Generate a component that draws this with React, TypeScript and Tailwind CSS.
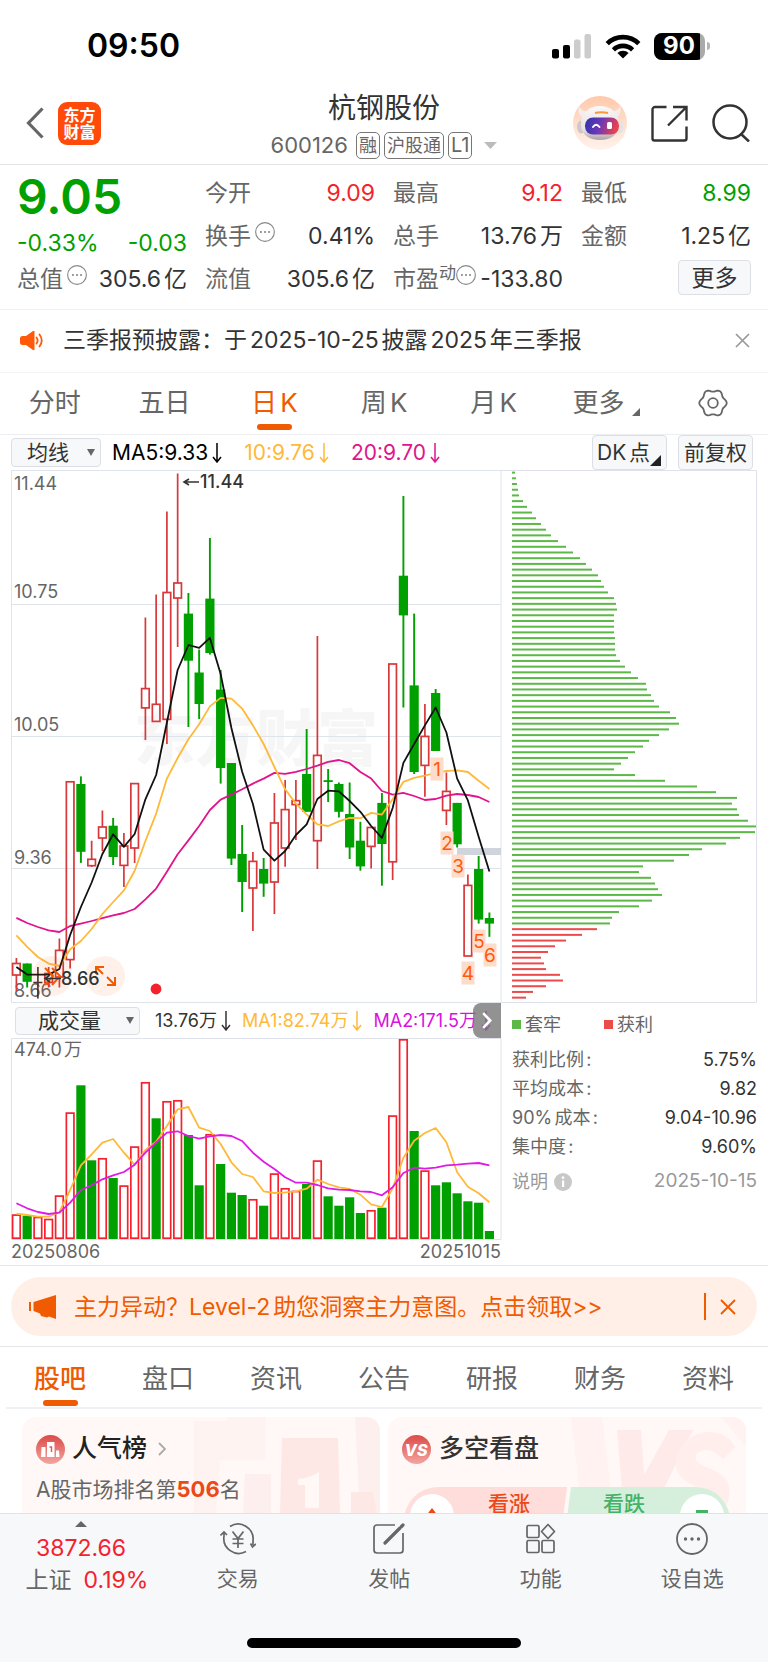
import React from "react";

const GREEN = "#00a000";
const RED = "#d8383a";

type Candle = [high: number, top: number, bottom: number, low: number, kind: "r" | "g" | "k"];

const STEP = 10.75;
const cx = (i: number) => 5.4 + i * STEP;

const candles: Candle[] = [
  [488, 493.5, 505, 521.4, "r"], [493.5, 493.5, 511.8, 517.5, "g"], [497, 512.5, 512.5, 528.5, "k"],
  [497, 503.5, 512.5, 517.5, "r"], [468.6, 480.4, 507, 517.5, "r"], [311.8, 311.8, 489.6, 498.6, "r"],
  [306.4, 314, 381.8, 392.9, "g"], [370.7, 389.3, 395.7, 397, "r"], [340.4, 357, 368, 381, "r"],
  [347.9, 355.7, 387, 395, "g"], [363, 376, 395.4, 417, "r"], [313.6, 313.6, 378, 393, "r"],
  [147.5, 218.6, 237.9, 270, "r"], [124.6, 234.3, 251.4, 251.4, "r"], [41.4, 122.5, 249.3, 274, "r"],
  [3.6, 113, 128, 177, "r"], [123, 143.6, 190.7, 257, "g"], [179.6, 202.5, 234, 249, "g"],
  [68, 128.6, 183, 184.6, "g"], [200, 219.6, 298, 313.6, "g"], [293, 293, 388.6, 395, "g"],
  [355, 384, 412, 442, "g"], [382, 391.4, 418, 461, "r"], [388, 399, 413.6, 426.8, "g"],
  [323, 353, 412, 444, "r"], [310, 339.6, 378, 396.8, "r"], [310, 330.7, 334.6, 370, "r"],
  [259, 304, 341.8, 341.8, "g"], [166, 285.4, 370.7, 399, "r"], [299, 310.2, 312, 332, "g"],
  [312.5, 314, 341.8, 347.5, "g"], [312.5, 344, 377.5, 389, "g"], [351.8, 370.7, 396.4, 400.7, "g"],
  [357, 357.5, 376.4, 398.6, "r"], [323, 332.9, 374, 415.7, "g"], [194, 194, 391.8, 410, "r"],
  [26, 105.7, 145.4, 237.5, "g"], [143.6, 215.4, 302, 304, "g"], [234, 266.4, 295.4, 326.8, "r"],
  [219, 223, 281, 281, "g"], [302.5, 321.4, 340.4, 355, "r"], [332.9, 332.9, 374.3, 377.5, "g"],
  [404.6, 415.4, 486, 486, "r"], [386, 399, 449.6, 453.6, "g"], [442.5, 448, 453.6, 466.8, "g"],
];

const ma5 = [497, 504.6, 504.6, 504.6, 499, 465, 437, 412.5, 384, 364.3, 376.8, 364, 329.3, 305, 252.5, 200, 175, 177.9, 167.9, 204, 258, 301.8, 334, 379.6, 390.7, 381, 365, 354.3, 329, 320.7, 321.4, 331, 341.8, 356, 367.9, 338, 292.9, 274, 255.4, 237.5, 262.5, 308.6, 330.4, 366.8, 401.4];
const ma10 = [465.4, 476.8, 487, 493.6, 496, 479.3, 471, 459, 444, 432, 420.4, 400.7, 371, 343.6, 308.6, 288, 269.3, 254.3, 236.4, 227.9, 228.6, 238.6, 255.4, 274, 297, 319.3, 333.6, 344.3, 354.3, 356, 351.4, 347.9, 348.2, 342.9, 344.6, 329.3, 311.8, 307.9, 305.7, 302.9, 301, 300.4, 302, 310.7, 319];
const ma20 = [447.9, 453, 457, 460.4, 462, 456, 453.6, 451, 448.2, 445.4, 443, 439, 429.3, 418.6, 401.8, 384.3, 370.4, 356, 340, 329.6, 324.6, 319.3, 313.6, 308.6, 302.9, 303.9, 301.8, 299, 295.7, 291.8, 290, 293.2, 302, 308.6, 321, 324.6, 322.9, 326, 330, 329, 325.7, 324, 325, 327, 332];

const volTop = [176.3, 177.7, 178.7, 180.7, 157.3, 74.3, 47.3, 122.3, 120, 140, 147.3, 108.3, 44, 80.3, 63, 62, 97, 147.3, 96, 126, 154.7, 157, 161, 167.7, 135.3, 150, 152.7, 146, 122.3, 158.3, 167.7, 159.3, 175, 172, 169.7, 77.3, 1, 93, 132.3, 147.3, 144.3, 155.3, 163.3, 164.7, 193];
const volKind = "rgrrrrggrgrrrgrrggrgggrgrrrgrggggrgrrgrgggggg";
const volMa1 = [175.7, 177, 178.7, 178.7, 174, 152, 127.3, 116.3, 104.7, 101, 114.7, 126.7, 112, 103.7, 88, 71.3, 69, 89.7, 93, 106, 124.3, 136, 139, 153.3, 155, 154.3, 153.3, 150.7, 141.7, 146, 149.3, 151, 156.7, 166.3, 169, 150.3, 119.7, 102.7, 95, 90, 104.3, 134.3, 148.7, 155.3, 164.3];
const volMa2 = [165.3, 170.3, 174, 176, 174.7, 164.7, 152, 147.3, 141.3, 137.3, 134, 126.7, 114.7, 104.3, 94.7, 93.3, 98, 100.7, 98.3, 97, 98, 103, 114.7, 123.7, 131, 139.3, 144.7, 144.7, 147, 150.3, 151.7, 152, 153.3, 154, 157.3, 149.3, 135, 129.7, 130.7, 129.7, 127.3, 126.7, 125.7, 125, 127.3];

const chips = [3, 4, 5, 6, 7, 11, 15, 20, 24, 29, 34, 39, 46, 54, 61, 68, 74, 80, 86, 89, 92, 96, 102, 104, 105, 102, 102, 102, 102, 103, 103, 103, 104, 108, 113, 119, 126, 134, 135, 139, 142, 147, 158, 164, 167, 157, 147, 137, 131, 123, 116, 109, 102, 123, 153, 185, 204, 225, 220, 225, 227, 236, 244, 243, 228, 214, 190, 177, 162, 131, 127, 139, 143, 146, 150, 140, 127, 107, 100, 98, 85, 70, 54, 43, 36, 29, 32, 34, 48, 51, 34, 21, 14];
const FIRST_PROFIT_ROW = 80;

const points = (ys: number[]) => ys.map((y, i) => `${cx(i)},${y}`).join(" ");

const gearOutline = Array.from({ length: 72 }, (_, i) => {
  const a = (i * Math.PI) / 36;
  const r = 12.5 + 1.2 * Math.cos(6 * a);
  return `${(15 + r * Math.cos(a)).toFixed(2)},${(15 + r * Math.sin(a)).toFixed(2)}`;
}).join(" ");

function StatusBar() {
  return (
    <div className="flex h-[82px] items-center justify-between pt-[10px] pr-[58px] pl-[87px]">
      <span className="text-[32px] leading-10 font-semibold text-black">09:50</span>
      <div className="flex items-center gap-[13px]">
        <svg className="h-[26px] w-10" viewBox="0 0 40 26" aria-hidden="true">
          <rect x="0" y="16" width="7" height="9.500" rx="2" fill="#000" />
          <rect x="11" y="12" width="7" height="13.500" rx="2" fill="#000" />
          <rect x="22" y="6.500" width="6.500" height="19" rx="2" fill="#ccc" />
          <rect x="32.500" y="1" width="6.500" height="24.500" rx="2" fill="#ccc" />
        </svg>
        <svg className="h-[26px] w-9" viewBox="0 0 36 26" aria-hidden="true" fill="none" stroke="#000" strokeWidth="4.600">
          <path d="M2.200 10.600a22.500 22.500 0 0 1 31.600 0" />
          <path d="M8.400 16.800a13.800 13.800 0 0 1 19.200 0" />
          <path d="M18 25.500l-5.600-5.400a8 8 0 0 1 11.200 0z" fill="#000" stroke="none" />
        </svg>
        <div className="flex items-center gap-0.5">
          <div className="flex h-[27px] w-[51px] overflow-hidden rounded-lg bg-[#aaa]">
            <span className="flex w-[46px] items-center justify-center bg-black pl-1 text-[24px] leading-none font-bold text-white">90</span>
          </div>
          <span className="h-2 w-[3px] rounded-r-full bg-[#b5b5b5]" />
        </div>
      </div>
    </div>
  );
}

function Robot() {
  return (
    <svg className="size-[54px]" viewBox="0 0 54 54" aria-hidden="true">
      <defs>
        <linearGradient id="halo" x1="0" y1="0" x2="0" y2="1">
          <stop offset="0" stopColor="#ffc9ab" />
          <stop offset="1" stopColor="#fff3ec" />
        </linearGradient>
        <linearGradient id="visor" x1="0" y1="0" x2="1" y2="0.200">
          <stop offset="0" stopColor="#2b35a8" />
          <stop offset="0.500" stopColor="#6a37b8" />
          <stop offset="1" stopColor="#e8414f" />
        </linearGradient>
        <linearGradient id="shell" x1="0" y1="0" x2="0" y2="1">
          <stop offset="0" stopColor="#fbf8f8" />
          <stop offset="0.700" stopColor="#e6e1e2" />
          <stop offset="1" stopColor="#aaa3a6" />
        </linearGradient>
      </defs>
      <circle cx="27" cy="27" r="27" fill="url(#halo)" />
      <path d="M6 10c-2 6 1 11 6 13l7-8c-6 1-11 0-13-5zM47 10c2 6-1 11-6 13l-7-8c6 1 11 0 13-5z" fill="#f3eded" />
      <ellipse cx="8" cy="31" rx="4" ry="6.500" fill="#cfc8cb" />
      <ellipse cx="47" cy="31" rx="3.500" ry="6.500" fill="#e6e1e2" />
      <path d="M27 10c12 0 19 8 19 19 0 9-8 15-19 15S8 38 8 29c0-11 7-19 19-19z" fill="url(#shell)" />
      <path d="M22 17q6-1.500 13 0" stroke="#f29a3c" strokeWidth="2.200" fill="none" />
      <rect x="12" y="21.500" width="34" height="17" rx="8" fill="url(#visor)" />
      <path d="M20 31q3-4.500 6.500 0" stroke="#fff" strokeWidth="2" fill="none" strokeLinecap="round" />
      <rect x="34" y="26" width="5" height="7" rx="1.500" fill="#fff" />
    </svg>
  );
}

function Header() {
  return (
    <header className="flex h-[83px] items-center justify-between border-b border-[#e4e4e4] pr-[18px] pl-[26px]">
      <div className="flex w-[200px] items-center gap-3.5">
        <button type="button" aria-label="返回">
          <svg className="h-8 w-[18px]" viewBox="0 0 18 32" fill="none" stroke="#666" strokeWidth="3.200">
            <path d="M16.500 1.500L2.500 16l14 14.500" />
          </svg>
        </button>
        <a href="#home" className="grid size-[43px] place-content-center rounded-[9px] bg-[#ff4a0a] text-center font-['Noto_Sans_CJK_SC',sans-serif] text-[16px] leading-[17px] font-bold text-white">
          <span>东方</span>
          <span>财富</span>
        </a>
      </div>
      <div className="flex flex-col items-center pt-[7px]">
        <h1 className="text-[28px] leading-[37px] text-[#333]">杭钢股份</h1>
        <div className="flex h-[36px] items-center gap-1 text-[#666]">
          <span className="pr-1 text-[22px]">600126</span>
          <span className="rounded-[5px] border border-[#777] px-0.5 text-[18px] leading-[25px]">融</span>
          <span className="rounded-[5px] border border-[#777] px-0.5 text-[18px] leading-[25px]">沪股通</span>
          <span className="rounded-[5px] border border-[#777] px-0.5 text-[20px] leading-[25px]">L1</span>
          <button type="button" aria-label="切换股票" className="pl-2">
            <svg className="h-[7px] w-[13px]" viewBox="0 0 13 7" fill="#bbb"><path d="M0 0h13L6.500 7z" /></svg>
          </button>
        </div>
      </div>
      <div className="flex w-[208px] items-center justify-end gap-6">
        <button type="button" aria-label="智能助手"><Robot /></button>
        <button type="button" aria-label="分享">
          <svg className="size-[37px]" viewBox="0 0 37 37" fill="none" stroke="#333" strokeWidth="2.400">
            <path d="M15.500 2H4a2.500 2.500 0 0 0-2.500 2.500v29A2 2 0 0 0 3.500 35.500h30a2 2 0 0 0 2-2V21.500M22 2h13.500v13.500M35 2.500L17 20.500" />
          </svg>
        </button>
        <button type="button" aria-label="搜索">
          <svg className="size-[38px]" viewBox="0 0 38 38" fill="none" stroke="#333" strokeWidth="2.500">
            <circle cx="18" cy="18" r="16.500" />
            <path d="M28.500 29.500l8.500 8" />
          </svg>
        </button>
      </div>
    </header>
  );
}

function Dots({ className }: { className: string }) {
  return (
    <svg className={className} viewBox="0 0 32 32" aria-hidden="true">
      <circle cx="16" cy="16" r="15" fill="none" stroke="currentColor" strokeWidth="1.800" />
      <circle cx="9.500" cy="16" r="1.700" fill="currentColor" />
      <circle cx="16" cy="16" r="1.700" fill="currentColor" />
      <circle cx="22.500" cy="16" r="1.700" fill="currentColor" />
    </svg>
  );
}

function Stat({ label, value, info, sup, tone = "text-[#333]" }: { label: string; value: string; info?: boolean; sup?: string; tone?: string }) {
  return (
    <div className="flex h-[43px] items-center justify-between">
      <dt className="flex items-center text-[#666]">
        {label}
        {sup && <sup className="top-0 self-start text-[17px] leading-4">{sup}</sup>}
        {info && <Dots className={sup ? "size-5 self-start text-[#888]" : "ml-1 size-5 self-start text-[#888]"} />}
      </dt>
      <dd className={tone}>{value}</dd>
    </div>
  );
}

function Quote() {
  return (
    <section className="grid h-[145px] grid-cols-4 gap-x-[18px] border-b border-[#f0f0f0] px-[17px] pt-[6px] text-[23px] leading-7 [text-autospace:normal]">
      <div>
        <p className="h-[54px] text-[48px] leading-[52px] font-semibold text-[#00a000]">9.05</p>
        <p className="flex h-8 items-center justify-between pt-1 text-[#00a000]"><span>-0.33%</span><span>-0.03</span></p>
        <dl><Stat label="总值" info value="305.6亿" /></dl>
      </div>
      <dl>
        <Stat label="今开" value="9.09" tone="text-[#f5222d]" />
        <Stat label="换手" info value="0.41%" />
        <Stat label="流值" value="305.6亿" />
      </dl>
      <dl>
        <Stat label="最高" value="9.12" tone="text-[#f5222d]" />
        <Stat label="总手" value="13.76万" />
        <Stat label="市盈" sup="动" info value="-133.80" />
      </dl>
      <div>
        <dl>
          <Stat label="最低" value="8.99" tone="text-[#00a000]" />
          <Stat label="金额" value="1.25亿" />
        </dl>
        <div className="flex justify-end pt-[3px]">
          <button type="button" className="h-[35px] w-[73px] rounded border border-[#dcdfe6] bg-[#f7f8fa] leading-8 text-[#333]">更多</button>
        </div>
      </div>
    </section>
  );
}

function Notice() {
  return (
    <section className="flex h-[63px] items-center border-b border-[#f4f4f4] pr-[18px] pb-0.5 pl-5">
      <svg className="h-[19px] w-6" viewBox="0 0 24 19" aria-hidden="true">
        <path d="M0 7.500Q0 5 2.500 5H6l7-5h1.500v19H13l-7-5H2.500Q0 14 0 11.500z" fill="#ff5a0a" />
        <path d="M16.500 6.500q2.200 3 0 6M19.500 3.500q4.500 6 0 12" fill="none" stroke="#ff5a0a" strokeWidth="1.800" strokeLinecap="round" />
      </svg>
      <a href="#notice" className="ml-[19px] flex-1 text-[23px] leading-8 text-[#333] [text-autospace:normal]">三季报预披露：于2025-10-25披露2025年三季报</a>
      <button type="button" aria-label="关闭公告">
        <svg className="size-[15px]" viewBox="0 0 15 15" fill="none" stroke="#999" strokeWidth="1.700"><path d="M1 1l13 13M14 1L1 14" /></svg>
      </button>
    </section>
  );
}

function PeriodTabs() {
  return (
    <nav className="grid h-[62px] grid-cols-7 border-b border-[#eceef2] text-[26px] text-[#666] [text-autospace:normal]">
      {["分时", "五日", "日K", "周K", "月K"].map((t) => (
        <button key={t} type="button" className={t === "日K" ? "flex flex-col items-center pt-[11px] text-[#f05a00]" : "flex flex-col items-center pt-[11px]"}>
          <span className="leading-[38px]">{t}</span>
          {t === "日K" && <span className="mt-[2px] h-[6px] w-[35px] rounded-full bg-[#f05a00]" />}
        </button>
      ))}
      <button type="button" className="flex items-start justify-center gap-2 pt-[11px] pl-1.5">
        <span className="leading-[38px]">更多</span>
        <svg className="mt-6 size-[8px]" viewBox="0 0 8 8" fill="#666"><path d="M8 0v8H0z" /></svg>
      </button>
      <button type="button" aria-label="设置" className="flex items-start justify-center pt-[15px]">
        <svg className="size-[30px]" viewBox="0 0 30 30" fill="none" stroke="#666" strokeWidth="1.800" strokeLinejoin="round">
          <polygon points={gearOutline} />
          <circle cx="15" cy="15" r="4.800" />
        </svg>
      </button>
    </nav>
  );
}

function DownArrow() {
  return (
    <svg className="h-5 w-[10px]" viewBox="0 0 10 20" fill="none" stroke="currentColor" strokeWidth="1.500" aria-hidden="true">
      <path d="M5 0v18.500M1 14l4 5 4-5" />
    </svg>
  );
}

function PickList({ label, value, size }: { label: string; value: string; size: string }) {
  return (
    <div className={`relative flex items-center ${size}`}>
      <select aria-label={label} defaultValue={value} className="size-full appearance-none rounded border border-[#dcdfe6] bg-[#f7f8fa] pr-4 text-center text-[21px] leading-[26px] text-[#333]">
        <option>{value}</option>
      </select>
      <svg className="pointer-events-none absolute right-1.5 h-[7px] w-2" viewBox="0 0 8 7" fill="#666" aria-hidden="true"><path d="M0 0h8L4 7z" /></svg>
    </div>
  );
}

function IndicatorBar() {
  return (
    <div className="flex h-[35px] items-center justify-between pr-[15px] pl-[11px] text-[21px]">
      <div className="flex items-center gap-[22px]">
        <div className="flex items-center gap-[11px]">
          <PickList label="指标" value="均线" size="h-[29px] w-[90px]" />
          <span className="flex items-center gap-1 text-black">MA5:9.33<DownArrow /></span>
        </div>
        <span className="flex items-center gap-1 text-[#ffb938]">10:9.76<DownArrow /></span>
        <span className="flex items-center gap-1 text-[#e0148c]">20:9.70<DownArrow /></span>
      </div>
      <div className="flex gap-[11px] text-[#333]">
        <button type="button" className="flex h-[35px] w-[75px] items-center rounded border border-[#dcdfe6] bg-[#f7f8fa] pl-1 [text-autospace:normal]">
          DK点
          <svg className="mt-4 size-[11px] shrink-0" viewBox="0 0 10 10" fill="#222" aria-hidden="true"><path d="M10 0v10H0z" /></svg>
        </button>
        <button type="button" className="h-[35px] w-[75px] rounded border border-[#dcdfe6] bg-[#f7f8fa]">前复权</button>
      </div>
    </div>
  );
}

const marks: [string, number, number][] = [["1", 426, 299], ["2", 436, 373], ["3", 447, 396], ["4", 457, 503], ["5", 468, 471], ["6", 479, 485]];
const axis: [string, number][] = [["11.44", 20], ["10.75", 128], ["10.05", 261], ["9.36", 394], ["8.66", 527]];

function CandleChart() {
  return (
    <svg className="block w-full overflow-visible" viewBox="0 0 490 533" role="img" aria-label="日K线图">
      <text x="123" y="291" fontSize="61" fontWeight="900" fill="#f6f6f7" fontFamily="'Noto Sans CJK SC', sans-serif">东方财富</text>
      <g stroke="#dfe4ec" fill="none">
        <path d="M0 134.500H490M0 266.500H490M0 398.500H490" />
        <path d="M.5 .5H490V532.500H.5z" />
      </g>
      <rect x="446" y="378" width="44" height="7" fill="#d0d5dd" />
      <g fill="#666" fontSize="18">
        {axis.map(([t, y]) => <text key={t} x="3" y={y}>{t}</text>)}
      </g>
      {candles.map(([h, t, b, l, k], i) => {
        const x = cx(i);
        if (k === "g")
          return (
            <g key={i} fill={GREEN}>
              <rect x={x - 0.95} y={h} width="1.900" height={l - h} />
              <rect x={x - 4.6} y={t} width="9.200" height={b - t} />
            </g>
          );
        if (k === "k") return <path key={i} d={`M${x} ${h}V${l}M${x - 4.5} ${t}h9`} stroke="#333" strokeWidth="1.600" />;
        return (
          <g key={i} stroke={RED} strokeWidth="1.700" fill="none">
            <path d={`M${x} ${h}V${t}M${x} ${b}V${l}`} />
            <rect x={x - 3.8} y={t} width="7.600" height={b - t} />
          </g>
        );
      })}
      <g fill="none" strokeWidth="1.800" strokeLinejoin="round">
        <polyline points={points(ma20)} stroke="#e0148c" />
        <polyline points={points(ma10)} stroke="#ffb938" />
        <polyline points={points(ma5)} stroke="#111" />
      </g>
      <g fill="#ff5a0a" fillOpacity="0.090">
        <circle cx="41" cy="506" r="20" />
        <circle cx="94" cy="506" r="20" />
      </g>
      <g fill="none" stroke="#f05a00" strokeWidth="2">
        <path d="M34 498l8 8-8 9M41 498l8 8-8 9" />
        <path d="M85 504v-7h8M86 498l6 6M96 515h8v-8M103 514l-7-7" />
      </g>
      <path d="M50 508.500H34M39 505l-5 3.500 5 3.500" fill="none" stroke="#333" strokeWidth="1.600" />
      <path d="M188 12H173.500M178 9l-5 3 5 3" fill="none" stroke="#333" strokeWidth="1.600" />
      <g fill="#333" fontSize="18" fontWeight="500">
        <text x="50" y="515">8.66</text>
        <text x="189" y="18">11.44</text>
      </g>
      <circle cx="145" cy="519" r="5.400" fill="#f5222d" />
      {marks.map(([t, x, y]) => (
        <g key={t}>
          <rect x={x - 6.5} y={y - 11.5} width="13" height="23" fill="#fddccb" />
          <text x={x} y={y + 7} fontSize="19" textAnchor="middle" fill="#ff5a0a">{t}</text>
        </g>
      ))}
    </svg>
  );
}

function ChipChart() {
  return (
    <svg className="block w-full overflow-visible" viewBox="0 0 245 533" role="img" aria-label="筹码分布">
      <path d="M-11 .5H244.500V532.500H-11" fill="none" stroke="#dfe2ea" />
      {chips.map((w, i) => (
        <rect key={i} x="0" y={1.6 + i * 5.707} width={w} height="2" fill={i < FIRST_PROFIT_ROW ? "#5cb947" : "#ec4b4b"} />
      ))}
    </svg>
  );
}

function VolumePanel() {
  return (
    <div className="min-w-0">
      <div className="relative flex h-[35px] items-center overflow-hidden pl-1 text-[18px] whitespace-nowrap">
        <PickList label="副图指标" value="成交量" size="h-7 w-[125px] shrink-0" />
        <span className="ml-[15px] flex items-center gap-1 text-[#333]">13.76万<DownArrow /></span>
        <span className="ml-[11px] flex items-center gap-1 text-[#ffb938]">MA1:82.74万<DownArrow /></span>
        <span className="ml-[11px] flex items-center gap-1 text-[#d912e0]">MA2:171.5万<DownArrow /></span>
        <button type="button" aria-label="更多指标" className="absolute right-0 flex h-[35px] w-7 items-center justify-center rounded-l-lg bg-[#777]/80">
          <svg className="h-[17px] w-2.5" viewBox="0 0 10 17" fill="none" stroke="#fff" strokeWidth="2.600"><path d="M1.200 1.200l7 7.300-7 7.300" /></svg>
        </button>
      </div>
      <svg className="block w-full overflow-visible [text-autospace:normal]" viewBox="0 0 490 202" role="img" aria-label="成交量图">
        <path d="M.5 .5H490V201.500H.5z" fill="none" stroke="#dfe2ea" />
        <text x="3" y="18" fontSize="18" fill="#666">474.0万</text>
        {volTop.map((t, i) =>
          volKind[i] === "g" ? (
            <rect key={i} x={cx(i) - 4.6} y={t} width="9.200" height={201 - t} fill={GREEN} />
          ) : (
            <rect key={i} x={cx(i) - 3.8} y={t + 0.8} width="7.600" height={199.4 - t} fill="none" stroke="#f5222d" strokeWidth="1.700" />
          )
        )}
        <g fill="none" strokeWidth="1.800" strokeLinejoin="round">
          <polyline points={points(volMa1)} stroke="#ffb938" />
          <polyline points={points(volMa2)} stroke="#e01ae6" />
        </g>
      </svg>
      <div className="flex h-[25px] justify-between text-[18px] leading-6 text-[#666]">
        <span>20250806</span>
        <span>20251015</span>
      </div>
    </div>
  );
}

const costs = [["获利比例:", "5.75%"], ["平均成本:", "9.82"], ["90%成本:", "9.04-10.96"], ["集中度:", "9.60%"]];

function ChipStats() {
  return (
    <div className="text-[18px] text-[#666] [text-autospace:normal]">
      <div className="flex h-[42px] items-center gap-[43px]">
        <span className="flex items-center gap-1"><i className="size-[9px] bg-[#5cb947]" />套牢</span>
        <span className="flex items-center gap-1"><i className="size-[9px] bg-[#ec4b4b]" />获利</span>
      </div>
      <dl>
        {costs.map(([k, v]) => (
          <div key={k} className="flex h-[29px] items-center justify-between">
            <dt>{k}</dt>
            <dd className="text-[#333]">{v}</dd>
          </div>
        ))}
      </dl>
      <div className="flex h-[41px] items-center justify-between text-[#999]">
        <button type="button" className="flex items-center gap-1.5">
          说明
          <svg className="size-[18px]" viewBox="0 0 18 18" aria-hidden="true">
            <circle cx="9" cy="9" r="9" fill="#c8c8c8" />
            <rect x="8" y="7.500" width="2.200" height="6.500" fill="#fff" />
            <circle cx="9" cy="4.700" r="1.400" fill="#fff" />
          </svg>
        </button>
        <span className="text-[19px]">2025-10-15</span>
      </div>
    </div>
  );
}

function Promo() {
  return (
    <section className="border-y border-[#e6e6e6] px-[11px] pt-[11px] pb-[10px]">
      <div className="flex h-[59px] items-center rounded-full bg-[#ffefe6] pr-[21px] pl-[18px] text-[#f05a00]">
        <svg className="h-6 w-7" viewBox="0 0 28 24" fill="#f05a00" aria-hidden="true">
          <rect x="0" y="7" width="2" height="9" />
          <path d="M4.500 7L27 0v24l-7-2.500-2 1-6-1.500-1-2.500L4.500 16z" />
        </svg>
        <a href="#level2" className="ml-[17px] flex-1 text-[23px] leading-8 [text-autospace:normal]">主力异动？Level-2助您洞察主力意图。点击领取&gt;&gt;</a>
        <button type="button" aria-label="关闭推广" className="flex h-[27px] items-center border-l-2 border-[#f05a00] pl-[14px]">
          <svg className="size-4" viewBox="0 0 16 16" fill="none" stroke="currentColor" strokeWidth="1.900"><path d="M1 1l14 14M15 1L1 15" /></svg>
        </button>
      </div>
    </section>
  );
}

function SectionTabs() {
  return (
    <nav className="mx-[6px] grid h-[62px] grid-cols-7 border-b-2 border-[#f0f1f4] text-[26px] text-[#666]">
      {["股吧", "盘口", "资讯", "公告", "研报", "财务", "资料"].map((t, i) => (
        <button key={t} type="button" className={i === 0 ? "flex flex-col items-center pt-[13px] font-medium text-[#f05a00]" : "flex flex-col items-center pt-[13px]"}>
          <span className="leading-[38px]">{t}</span>
          {i === 0 && <span className="mt-[2px] h-[6px] w-[35px] rounded-full bg-[#f05a00]" />}
        </button>
      ))}
    </nav>
  );
}

function Cards() {
  return (
    <section className="grid h-[104px] grid-cols-2 gap-2 overflow-hidden px-[22px] pt-2">
      <article className="relative h-[160px] overflow-hidden rounded-[14px] bg-[#fff8f6] px-[14px] pt-4">
        <svg className="absolute top-0 right-0 h-[97px] w-[190px]" viewBox="0 0 190 97" aria-hidden="true">
          <path d="M4 4h32l2-4h38l-1 43H30L26 97H4z" fill="#fff3f1" />
          <path d="M55 57h26v40H53zM165 0h25v97h-20z" fill="#fdefed" />
          <path d="M92 21h56l2 76H90z" fill="#fde8e6" />
          <path d="M108 62q12-1 21-7v36h-14V68h-7z" fill="#fff8f6" />
          <path d="M161 75h22l4 22h-26z" fill="#fde8e6" />
        </svg>
        <a href="#rank" className="relative flex h-8 items-center">
          <svg className="size-[29px]" viewBox="0 0 29 29" aria-hidden="true">
            <defs><linearGradient id="badge" x1="0" y1="0" x2="0" y2="1"><stop offset="0" stopColor="#dc4a48" /><stop offset="1" stopColor="#f3a5a0" /></linearGradient></defs>
            <circle cx="14.500" cy="14.500" r="14.500" fill="url(#badge)" />
            <path d="M5.500 12h4v10H5zM11 7h7.500v15H11zM20 15.500h3l.5 6.500H20z" fill="#fff" />
            <path d="M13.500 12h2v5" stroke="#dc5a56" strokeWidth="1.400" fill="none" />
          </svg>
          <h2 className="ml-[7px] text-[25px] font-medium text-[#222]">人气榜</h2>
          <svg className="ml-[11px] h-[14px] w-2" viewBox="0 0 8 14" fill="none" stroke="#aaa" strokeWidth="1.800" aria-hidden="true"><path d="M1 1l6 6-6 6" /></svg>
        </a>
        <p className="relative pt-2 text-[21px] leading-8 text-[#666]">A股市场排名第<b className="text-[22px] font-bold text-[#ea4a17]">506</b>名</p>
      </article>
      <article className="relative h-[160px] overflow-hidden rounded-[14px] bg-[#fff8f6] px-[14px] pt-4">
        <svg className="absolute top-0 right-0 h-[97px] w-[175px]" viewBox="0 0 175 97" aria-hidden="true">
          <path d="M0 0h31l9 75H9zM82 0h93v30L150 0z" fill="#fff2f0" />
          <path d="M46 13h24l3 45 25-45h24L80 97H53z" fill="#feeae8" />
          <path d="M164 30l-12 12q-14-14-26-6-6 9 14 16 22 9 18 28-2 10-8 17H96l9-12q20 10 32-2 3-8-13-14-24-10-18-30 6-22 32-24 18 0 26 15z" fill="#ffeeec" />
        </svg>
        <div className="relative flex h-8 items-center">
          <svg className="size-[29px]" viewBox="0 0 29 29" aria-hidden="true">
            <circle cx="14.500" cy="14.500" r="14.500" fill="url(#badge)" />
            <text x="14" y="20.500" fontSize="16" fontWeight="800" fontStyle="italic" textAnchor="middle" fill="#fff">VS</text>
          </svg>
          <h2 className="ml-2 text-[25px] font-medium text-[#333]">多空看盘</h2>
        </div>
        <div className="relative mx-0.5 mt-[22px] grid h-[70px] grid-cols-2 text-[21px] leading-5 font-medium">
          <button type="button" className="flex items-start rounded-l-[34px] bg-[#fedddb] pt-[7px] pl-[6px] text-[#ea4a17] [clip-path:polygon(0_0,100%_0,calc(100%_-_9px)_100%,0_100%)]">
            <span className="grid size-[44px] place-content-center rounded-full bg-white">
              <svg className="size-4" viewBox="0 0 16 16" fill="currentColor" aria-hidden="true"><path d="M8 0l7 9h-4v7H5V9H1z" /></svg>
            </span>
            <span className="ml-[34px]">看涨</span>
          </button>
          <button type="button" className="flex items-start justify-between rounded-r-[34px] bg-[#d5efdc] pt-[7px] pr-[6px] pl-[36px] text-[#44b268] [clip-path:polygon(4px_0,100%_0,100%_100%,-5px_100%)]">
            <span>看跌</span>
            <span className="grid size-[44px] place-content-center rounded-full bg-white">
              <svg className="h-3 w-4" viewBox="0 0 16 12" fill="currentColor" aria-hidden="true"><path d="M2 0h12v5H2z" /></svg>
            </span>
          </button>
        </div>
      </article>
    </section>
  );
}

const navIcon = "size-8";

function BottomNav() {
  const items = [
    {
      label: "交易",
      icon: (
        <svg className="h-8 w-9" viewBox="0 0 36 32" fill="none" stroke="#666" strokeWidth="1.700" aria-hidden="true">
          <path d="M10 3.500A15 15 0 0 1 33 18v4M26 28.500A15 15 0 0 1 4 13V9M0.500 12.500L4 9l3 3M36 21l-3.500 3-2-3.500" />
          <path d="M12.500 8.500l5.500 7 5.500-7M18 15.500V25M12.500 16h11M12.500 20.500h11" />
        </svg>
      ),
    },
    {
      label: "发帖",
      icon: (
        <svg className={navIcon} viewBox="0 0 32 32" fill="none" stroke="#666" strokeWidth="1.700" aria-hidden="true">
          <path d="M22 2H4a3 3 0 0 0-3 3v22a3 3 0 0 0 3 3h23a3 3 0 0 0 3-3V10" />
          <path d="M12 20L27 5M28.500 3.500l1.500-1.500" strokeWidth="3.200" strokeLinecap="round" />
        </svg>
      ),
    },
    {
      label: "功能",
      icon: (
        <svg className={navIcon} viewBox="0 0 32 32" fill="none" stroke="#666" strokeWidth="1.700" strokeLinejoin="round" aria-hidden="true">
          <rect x="2" y="2.500" width="12" height="12" rx="1.500" />
          <rect x="2" y="17.500" width="12" height="12" rx="1.500" />
          <rect x="17" y="17.500" width="12" height="12" rx="1.500" />
          <path d="M23 1.500l6.500 7-6.500 7-6.500-7z" />
        </svg>
      ),
    },
    { label: "设自选", icon: <Dots className="size-8 text-[#666]" /> },
  ];
  return (
    <footer className="border-t border-[#dfe2e8] bg-[#f7f8fa] pb-[14px]">
      <div className="flex h-[124px] pt-[7px]">
        <button type="button" className="flex w-[162px] flex-col items-center text-[23px] leading-8">
          <svg className="mb-[5px] h-[6px] w-3" viewBox="0 0 12 6" fill="#666" aria-hidden="true"><path d="M6 0l6 6H0z" /></svg>
          <span className="text-[#f5222d]">3872.66</span>
          <span className="flex gap-3 pl-3 text-[#666]">上证<span className="text-[#f5222d]">0.19%</span></span>
        </button>
        <div className="grid flex-1 grid-cols-4">
          {items.map((it) => (
            <a key={it.label} href={`#${it.label}`} className="flex flex-col items-center gap-2 pt-[2px] text-[21px] leading-8 text-[#666]">
              {it.icon}
              <span>{it.label}</span>
            </a>
          ))}
        </div>
      </div>
      <div className="mx-auto h-[10px] w-[274px] rounded-full bg-black" />
    </footer>
  );
}

export default function App() {
  return (
    <div lang="zh-CN" className="bg-white font-['Inter','Noto_Sans_CJK_SC',sans-serif]">
      <StatusBar />
      <Header />
      <Quote />
      <Notice />
      <PeriodTabs />
      <IndicatorBar />
      <main className="grid grid-cols-[minmax(0,2fr)_minmax(0,1fr)] gap-x-[11px] px-[11px]">
        <CandleChart />
        <ChipChart />
        <VolumePanel />
        <ChipStats />
      </main>
      <Promo />
      <SectionTabs />
      <Cards />
      <BottomNav />
    </div>
  );
}
